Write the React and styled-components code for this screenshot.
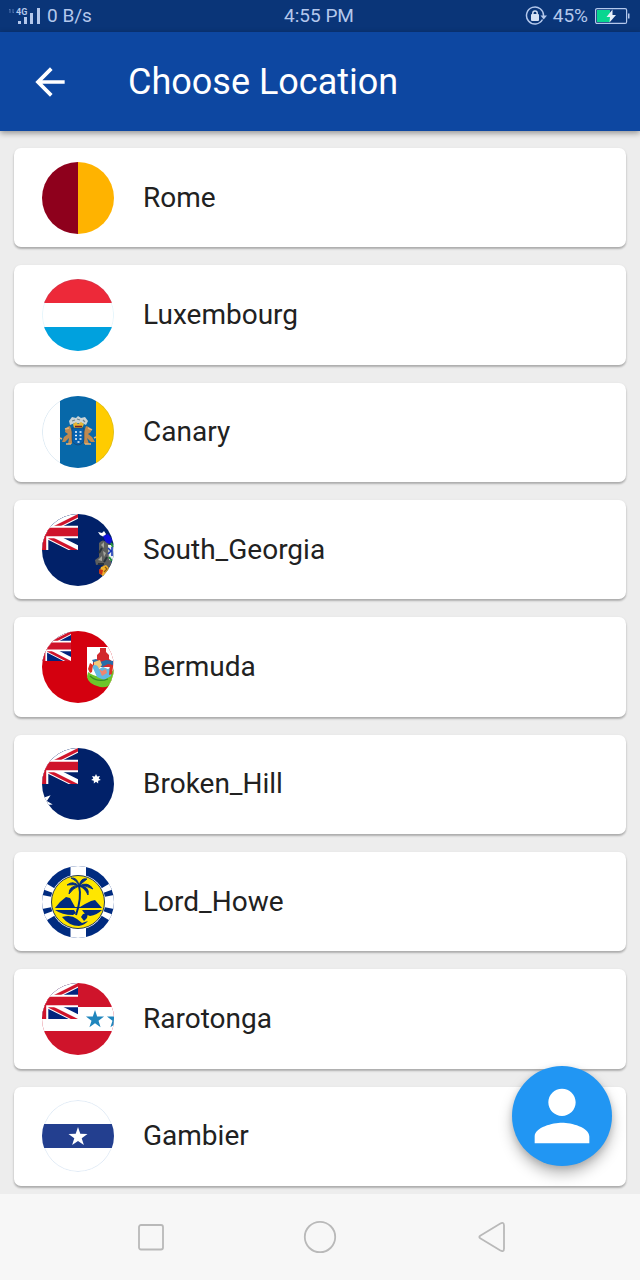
import React from "react";
import styled, { createGlobalStyle } from "styled-components";

const GlobalStyle = createGlobalStyle`
  * { box-sizing: border-box; }
  body {
    margin: 0;
    background: #ededed;
    font-family: Roboto, "Liberation Sans", sans-serif;
  }
  button {
    border: 0;
    padding: 0;
    background: none;
    color: inherit;
    font: inherit;
    cursor: pointer;
  }
  svg { display: block; }
`;

const Screen = styled.div`
  min-height: 100vh;
  display: flex;
  flex-direction: column;
`;

const StatusBar = styled.div`
  display: grid;
  grid-template-columns: 1fr auto 1fr;
  align-items: center;
  height: 32px;
  padding: 0 10px 0 8px;
  background: #0a3578;
  color: #b4c8ec;
  font-size: 19px;
  line-height: 32px;
`;

const StatusGroup = styled.div`
  display: flex;
  align-items: center;
  gap: ${(p) => p.$gap}px;
  justify-content: ${(p) => (p.$end ? "flex-end" : "flex-start")};
`;

const AppBar = styled.header`
  display: flex;
  align-items: center;
  gap: 56px;
  height: 99px;
  padding: 0 28px;
  background: #0d47a1;
  color: #fff;
  box-shadow: 0 2px 6px rgba(0, 0, 0, 0.4);
  z-index: 1;
`;

const BackButton = styled.button`
  width: 44px;
  height: 44px;
`;

const Title = styled.h1`
  margin: 0;
  font-size: 36px;
  font-weight: 400;
  line-height: 44px;
`;

const Main = styled.main`
  position: relative;
  flex: 1;
  display: grid;
`;

const LocationList = styled.ul`
  display: grid;
  grid-auto-rows: 1fr;
  gap: 18px;
  margin: 0;
  padding: 17px 14px 8px;
  list-style: none;
`;

const LocationCard = styled.button`
  display: flex;
  align-items: center;
  gap: 29px;
  width: 100%;
  height: 100%;
  padding: 12px 28px;
  border-radius: 7px;
  background: #fff;
  color: #212121;
  font-size: 28px;
  line-height: 36px;
  text-align: left;
  box-shadow: 0 2px 2px rgba(0, 0, 0, 0.22), 0 1px 3px rgba(0, 0, 0, 0.1);
`;

const FlagImage = styled.svg`
  flex: none;
  width: 72px;
  height: 72px;
  border-radius: 50%;
`;

const Fab = styled.button`
  position: absolute;
  right: 28px;
  bottom: 28px;
  display: grid;
  place-items: center;
  width: 100px;
  height: 100px;
  border-radius: 50%;
  background: #2196f3;
  color: #fff;
  box-shadow: 0 8px 14px rgba(0, 0, 0, 0.26), 0 2px 6px rgba(0, 0, 0, 0.14);
`;

const NavBar = styled.nav`
  display: flex;
  align-items: center;
  justify-content: center;
  gap: 121px;
  height: 86px;
  background: #f7f7f7;
`;

const NavButton = styled.button`
  display: grid;
  place-items: center;
  width: 48px;
  height: 48px;
`;

function starPoints(cx, cy, outer, inner, count) {
  return Array.from({ length: count * 2 }, (_, i) => {
    const r = i % 2 ? inner : outer;
    const a = (Math.PI * i) / count - Math.PI / 2;
    return `${(cx + r * Math.cos(a)).toFixed(2)},${(cy + r * Math.sin(a)).toFixed(2)}`;
  }).join(" ");
}

/* Right-hand half of a union canton, drawn in a 30 x 30 box. */
function UnionHalf({ width, height, blue = "#00247d" }) {
  return (
    <svg width={width} height={height} viewBox="0 0 30 30" preserveAspectRatio="none">
      <rect width="30" height="30" fill={blue} />
      <path d="M0 15 30 0M0 15 30 30" stroke="#fff" strokeWidth="7" />
      <path d="M0 15 30 0V3L6 15ZM0 15 30 30H24L-6 15Z" fill="#cf142b" />
      <path d="M0 0V30M0 15H30" stroke="#fff" strokeWidth="10.5" />
      <path d="M0 0V30M0 15H30" stroke="#cf142b" strokeWidth="7" />
    </svg>
  );
}

function RomeFlag() {
  return (
    <>
      <rect width="36" height="72" fill="#8e001c" />
      <rect x="36" width="36" height="72" fill="#ffb300" />
    </>
  );
}

function LuxembourgFlag() {
  return (
    <>
      <rect width="72" height="72" fill="#fff" />
      <rect width="72" height="24" fill="#ed2939" />
      <rect y="48" width="72" height="24" fill="#00a1de" />
      <circle cx="36" cy="36" r="35.7" fill="none" stroke="#00a1de" strokeOpacity="0.2" strokeWidth="0.6" />
    </>
  );
}

function CanaryFlag() {
  return (
    <>
      <rect width="72" height="72" fill="#fff" />
      <rect x="18" width="36" height="72" fill="#0768a9" />
      <rect x="54" width="18" height="72" fill="#ffcc00" />
      <circle cx="36" cy="36" r="35.7" fill="none" stroke="#0768a9" strokeOpacity="0.25" strokeWidth="0.6" />
      <path d="M28 29 27 25 30 21 34 22 36 20 39 22 43 21 46 25 44 29 40 27H33Z" fill="#c9d3d6" />
      <path d="M30 25 33 24M35 23 38 24M41 24 43 26" stroke="#70858e" strokeWidth="1.2" />
      <path d="M31 28 34 26 36 28 39 26 42 28 40 32H32Z" fill="#e8b634" />
      <path d="M33 30.5H40" stroke="#7a2222" strokeWidth="1.6" />
      <path d="M28 30Q23 31 23 36L26 38 22 41 20 46H23L27 42 26 48H30V36Z" fill="#bf8a50" />
      <path d="M44 30Q49 31 49 36L46 38 50 41 53 46H49L45 42 47 48H42V36Z" fill="#bf8a50" />
      <path d="M23 33 27 32M20 43 18 42M46 32 50 34M52 42 54 41M24 48H29M43 48H49" stroke="#e3b176" strokeWidth="1.6" />
      <path d="M30 32H42V43Q42 48 36 49Q30 48 30 43Z" fill="#0561b0" stroke="#1f405e" strokeWidth="0.6" />
      <path d="M33 36H35M37.5 36H39.500M33 39.500H35M37.500 39.500H39.500M33 43H35M37.500 43H39.500M35.500 46H37.500" stroke="#eef5fa" strokeWidth="1.7" />
    </>
  );
}

function SouthGeorgiaFlag() {
  return (
    <>
      <rect width="72" height="72" fill="#012169" />
      <UnionHalf width="36" height="36" blue="#012169" />
      <path d="M56 18 60 19 62 17 64 20 62 23 58 21Z" fill="#fff" />
      <path d="M61 22 66 20 70 25 69 30 64 29Z" fill="#1010d8" />
      <path d="M57 29Q61 24 65 29L69 31V52L64 54 59 50 54 51 53 46 57 43Z" fill="#5c5e5e" />
      <path d="M59 31 62 28 62 34ZM56 46 60 42 60 47ZM61 37 64 39 62 43Z" fill="#a5a59c" />
      <path d="M57 39 60 34M62 48 65 43M56 50 62 50" stroke="#29323b" strokeWidth="2" />
      <path d="M66 31H72V47L67 46Z" fill="#e9f1ee" />
      <path d="M66 34 69 37 66 40M70 33V42" fill="none" stroke="#1836b4" strokeWidth="1.6" />
      <path d="M69 29 71 33M67 43 70 47" stroke="#25913c" strokeWidth="2" />
      <path d="M59 53 64 51 68 55 62 63 57 59Z" fill="#f2b12b" />
      <path d="M57 55 61 56 60 61 57 59Z" fill="#c93217" />
      <path d="M63 53 65 55 62 58" fill="none" stroke="#8a5a16" strokeWidth="1.2" />
    </>
  );
}

function BermudaFlag() {
  return (
    <>
      <rect width="72" height="72" fill="#d4000f" />
      <UnionHalf width="29" height="30" />
      <path d="M45 16H72V50Q66 57 58 55Q45 51 45 43Z" fill="#fff" />
      <path d="M46 41Q52 46 59 45Q67 46 72 38V52Q66 57 58 56Q46 53 45 46Z" fill="#6dc52a" />
      <path d="M58 17H64V21L67 24V28L71 31V36H51V31L55 28V24L58 21Z" fill="#d22a2d" />
      <path d="M50 29 54 28 58 31 64 29 71 30V34L66 33 60 36 53 34Z" fill="#286ca8" />
      <path d="M52 31 58 29 60 34 56 39 52 37Z" fill="#f2c97c" />
      <path d="M50 35Q55 32 57 38L61 36 66 38 69 36V45L62 49 55 46Z" fill="#62b8e2" />
      <path d="M48 32 51 34 50 41 48 42 46 38ZM68 33 71 36 70 43 67 44Z" fill="#dc3224" />
      <path d="M57 38 60 40 64 38 65 42 60 45Z" fill="#ef856f" />
      <path d="M48 45Q56 52 66 48" fill="none" stroke="#348f26" strokeWidth="1.2" />
    </>
  );
}

function BrokenHillFlag() {
  return (
    <>
      <rect width="72" height="72" fill="#012169" />
      <UnionHalf width="36" height="36" blue="#012169" />
      <polygon points={starPoints(54, 31, 5, 2.8, 7)} fill="#fff" />
      <polygon points={starPoints(0, 54, 11, 5, 7)} fill="#fff" />
    </>
  );
}

function LordHoweFlag() {
  return (
    <>
      <rect width="72" height="72" fill="#002b80" />
      <path d="M28.500 0H44V72H28.500Z" fill="#fff" />
      <path d="M36 36 0 15V23ZM36 36 0 29V43ZM36 36 0 49V57ZM36 36 72 15V23ZM36 36 72 29V43ZM36 36 72 49V57Z" fill="#fff" />
      <circle cx="36" cy="36" r="27.500" fill="#fff" />
      <circle cx="36" cy="36" r="26.500" fill="#ffe600" stroke="#283c57" strokeWidth="1" />
      <path d="M13 42Q18 35 24 31L28 32 33 41H38L43 38 49 35 53 34 60 42Z" fill="#002b80" />
      <path d="M13 44H32L34 47 31 49Q20 49 13 44ZM40 44H60Q55 49 48 50L43 48Z" fill="#002b80" />
      <path d="M20 51Q29 48 35 53L40 57 46 55Q43 59 37 60Q27 60 20 51ZM41 48 46 47 45 52 42 55 39 51Z" fill="#002b80" />
      <path d="M37 20Q40 31 34 49" fill="none" stroke="#002b80" strokeWidth="2" />
      <path
        d="M37 20Q31 14 25 19Q32 18 37 20ZM37 19Q35 11 29 12Q34 14 37 19ZM37 20Q39 11 45 13Q41 16 37 20ZM37 20Q46 15 51 23Q44 19 37 20ZM37 20Q27 19 27 28Q31 22 37 20ZM37 20Q48 20 46 29Q43 22 37 20Z"
        fill="#002b80"
        stroke="#002b80"
        strokeWidth="0.900"
      />
    </>
  );
}

function RarotongaFlag() {
  return (
    <>
      <rect width="72" height="72" fill="#cf142b" />
      <rect y="24" width="72" height="24" fill="#fff" />
      <UnionHalf width="36" height="36" />
      <polygon points={starPoints(53, 36.5, 9.5, 3.7, 5)} fill="#2086bd" />
      <polygon points={starPoints(74, 36.5, 9.5, 3.7, 5)} fill="#2086bd" />
    </>
  );
}

function GambierFlag() {
  return (
    <>
      <rect width="72" height="72" fill="#fff" />
      <circle cx="36" cy="36" r="35.5" fill="none" stroke="#dce8f4" strokeWidth="0.9" />
      <rect y="24" width="72" height="24" fill="#233f8f" />
      <polygon points={starPoints(36, 37, 10, 3.9, 5)} fill="#fff" />
    </>
  );
}

const LOCATIONS = [
  { name: "Rome", Flag: RomeFlag },
  { name: "Luxembourg", Flag: LuxembourgFlag },
  { name: "Canary", Flag: CanaryFlag },
  { name: "South_Georgia", Flag: SouthGeorgiaFlag },
  { name: "Bermuda", Flag: BermudaFlag },
  { name: "Broken_Hill", Flag: BrokenHillFlag },
  { name: "Lord_Howe", Flag: LordHoweFlag },
  { name: "Rarotonga", Flag: RarotongaFlag },
  { name: "Gambier", Flag: GambierFlag },
];

const SignalLabel = styled.text`
  font-size: 9px;
  font-weight: 700;
  fill: #b4c8ec;
`;

function SignalIcon() {
  return (
    <svg width="33" height="20" viewBox="0 0 33 20" aria-hidden="true">
      <path d="M2 7V3M1 4 2 3M5 3V7M5 7 6 6" stroke="#4f74ae" fill="none" />
      <SignalLabel x="8" y="9">4G</SignalLabel>
      <path d="M10 15H13V18H10ZM16 11H19V18H16ZM22 7H25V18H22ZM29 2H32V18H29Z" fill="#b4c8ec" />
    </svg>
  );
}

function RotationLockIcon() {
  return (
    <svg width="22" height="20" viewBox="0 0 22 20" aria-hidden="true">
      <path d="M17.500 13.500A8.500 8.500 0 1 1 18.500 10" fill="none" stroke="#b4c8ec" strokeWidth="1.500" />
      <path d="M15.500 9.500H22L18.700 13.500Z" fill="#b4c8ec" />
      <rect x="6" y="8" width="8" height="7" rx="1" fill="#d5e1f5" />
      <path d="M7.800 9V7.200A2.200 2.200 0 0 1 12.200 7.200V9" fill="none" stroke="#d5e1f5" strokeWidth="1.500" />
    </svg>
  );
}

function BatteryIcon() {
  return (
    <svg width="36" height="18" viewBox="0 0 36 18" aria-hidden="true">
      <rect x="1.600" y="1.600" width="31" height="14.800" rx="1.500" fill="none" stroke="#b4c8ec" strokeWidth="1.200" />
      <rect x="3" y="3" width="13" height="12" fill="#08d690" />
      <path d="M34 6.500H35.500V11.500H34Z" fill="#b4c8ec" />
      <path d="M18.500 2.500 12.500 10H16L15.500 15.500 22 8H18.500Z" fill="#e6eef9" />
    </svg>
  );
}

export default function App() {
  return (
    <>
      <GlobalStyle />
      <Screen>
        <StatusBar>
          <StatusGroup $gap={6}>
            <SignalIcon />
            <span>0 B/s</span>
          </StatusGroup>
          <span>4:55 PM</span>
          <StatusGroup $gap={6} $end>
            <RotationLockIcon />
            <span>45%</span>
            <BatteryIcon />
          </StatusGroup>
        </StatusBar>

        <AppBar>
          <BackButton aria-label="Back">
            <svg width="44" height="44" viewBox="0 0 24 24" fill="currentColor">
              <path d="M20 11H7.830l5.590-5.590L12 4l-8 8 8 8 1.410-1.410L7.830 13H20v-2z" />
            </svg>
          </BackButton>
          <Title>Choose Location</Title>
        </AppBar>

        <Main>
          <LocationList>
            {LOCATIONS.map(({ name, Flag }) => (
              <li key={name}>
                <LocationCard>
                  <FlagImage viewBox="0 0 72 72" aria-hidden="true">
                    <Flag />
                  </FlagImage>
                  <span>{name}</span>
                </LocationCard>
              </li>
            ))}
          </LocationList>
          <Fab aria-label="Profile">
            <svg width="82" height="82" viewBox="0 0 24 24" fill="currentColor">
              <path d="M12 12c2.210 0 4-1.790 4-4s-1.790-4-4-4-4 1.790-4 4 1.790 4 4 4zm0 2c-2.670 0-8 1.340-8 4v2h16v-2c0-2.660-5.330-4-8-4z" />
            </svg>
          </Fab>
        </Main>

        <NavBar aria-label="System navigation">
          <NavButton aria-label="Recent apps">
            <svg width="34" height="34" viewBox="0 0 34 34" fill="none" stroke="#b9b9b9" strokeWidth="1.800">
              <rect x="5" y="5" width="24" height="24.500" rx="2" />
            </svg>
          </NavButton>
          <NavButton aria-label="Home">
            <svg width="34" height="34" viewBox="0 0 34 34" fill="none" stroke="#b9b9b9" strokeWidth="1.800">
              <circle cx="17" cy="17" r="15.200" />
            </svg>
          </NavButton>
          <NavButton aria-label="Back to previous screen">
            <svg width="34" height="34" viewBox="0 0 34 34" fill="none" stroke="#b9b9b9" strokeWidth="1.800">
              <path d="M8.600 15.400 28 3.700Q32 1.500 32 5.500V28.500Q32 32.500 28 30.300L8.600 18.600Q6 17 8.600 15.400Z" />
            </svg>
          </NavButton>
        </NavBar>
      </Screen>
    </>
  );
}
